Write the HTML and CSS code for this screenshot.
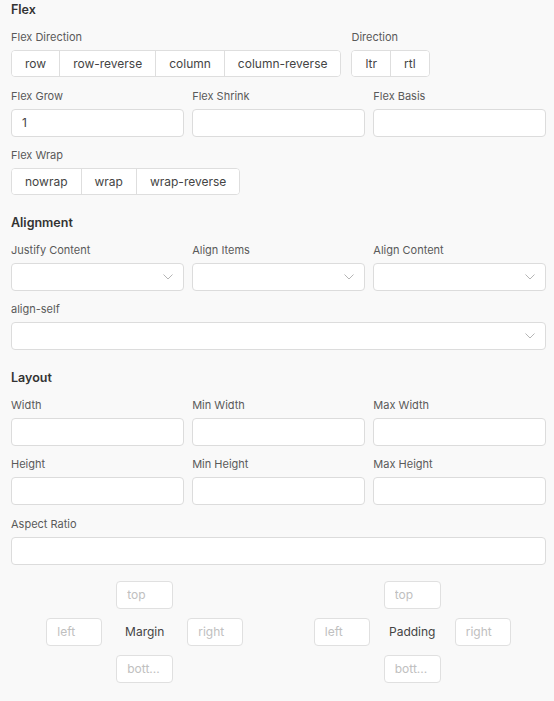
FILE: index.html
```html
<!DOCTYPE html>
<html>
<head>
<meta charset="utf-8">
<link rel="stylesheet" href="styles.css">
</head>
<body>
<div class="panel">
  <section class="section">
    <h2 class="heading">Flex</h2>
    <div class="row row-split">
      <div class="field">
        <div class="label">Flex Direction</div>
        <div class="seg">
          <button class="seg-btn">row</button>
          <button class="seg-btn">row-reverse</button>
          <button class="seg-btn">column</button>
          <button class="seg-btn">column-reverse</button>
        </div>
      </div>
      <div class="field">
        <div class="label">Direction</div>
        <div class="seg">
          <button class="seg-btn">ltr</button>
          <button class="seg-btn">rtl</button>
        </div>
      </div>
    </div>
    <div class="row grid3">
      <div class="field">
        <div class="label">Flex Grow</div>
        <input class="input" value="1">
      </div>
      <div class="field">
        <div class="label">Flex Shrink</div>
        <input class="input">
      </div>
      <div class="field">
        <div class="label">Flex Basis</div>
        <input class="input">
      </div>
    </div>
    <div class="row">
      <div class="field">
        <div class="label">Flex Wrap</div>
        <div class="seg">
          <button class="seg-btn">nowrap</button>
          <button class="seg-btn">wrap</button>
          <button class="seg-btn">wrap-reverse</button>
        </div>
      </div>
    </div>
  </section>

  <section class="section">
    <h2 class="heading">Alignment</h2>
    <div class="row grid3">
      <div class="field">
        <div class="label">Justify Content</div>
        <div class="select"><svg class="chev" width="10" height="6" viewBox="0 0 10 6"><path d="M0.5 0.5 L5 5 L9.5 0.5" fill="none" stroke="#b5b5b5" stroke-width="1"/></svg></div>
      </div>
      <div class="field">
        <div class="label">Align Items</div>
        <div class="select"><svg class="chev" width="10" height="6" viewBox="0 0 10 6"><path d="M0.5 0.5 L5 5 L9.5 0.5" fill="none" stroke="#b5b5b5" stroke-width="1"/></svg></div>
      </div>
      <div class="field">
        <div class="label">Align Content</div>
        <div class="select"><svg class="chev" width="10" height="6" viewBox="0 0 10 6"><path d="M0.5 0.5 L5 5 L9.5 0.5" fill="none" stroke="#b5b5b5" stroke-width="1"/></svg></div>
      </div>
    </div>
    <div class="row">
      <div class="field">
        <div class="label">align-self</div>
        <div class="select"><svg class="chev" width="10" height="6" viewBox="0 0 10 6"><path d="M0.5 0.5 L5 5 L9.5 0.5" fill="none" stroke="#b5b5b5" stroke-width="1"/></svg></div>
      </div>
    </div>
  </section>

  <section class="section">
    <h2 class="heading">Layout</h2>
    <div class="row grid3">
      <div class="field"><div class="label">Width</div><input class="input"></div>
      <div class="field"><div class="label">Min Width</div><input class="input"></div>
      <div class="field"><div class="label">Max Width</div><input class="input"></div>
    </div>
    <div class="row grid3">
      <div class="field"><div class="label">Height</div><input class="input"></div>
      <div class="field"><div class="label">Min Height</div><input class="input"></div>
      <div class="field"><div class="label">Max Height</div><input class="input"></div>
    </div>
    <div class="row">
      <div class="field"><div class="label">Aspect Ratio</div><input class="input"></div>
    </div>
    <div class="spacing">
      <div class="box">
        <input class="small t" placeholder="top">
        <input class="small l" placeholder="left">
        <div class="box-title">Margin</div>
        <input class="small r" placeholder="right">
        <input class="small b" placeholder="bott...">
      </div>
      <div class="box">
        <input class="small t" placeholder="top">
        <input class="small l" placeholder="left">
        <div class="box-title">Padding</div>
        <input class="small r" placeholder="right">
        <input class="small b" placeholder="bott...">
      </div>
    </div>
  </section>
</div>
</body>
</html>
```

FILE: styles.css
```css
* { box-sizing: border-box; }
html, body { margin: 0; padding: 0; background: #f9f9f9; }
body {
  font-family: Inter, "Noto Sans", "Liberation Sans", sans-serif;
  color: #555;
  width: 554px;
  height: 701px;
  overflow: hidden;
}
.panel {
  padding: 2px 8px 0 11px;
}
.section { margin-bottom: 19.5px; }
.heading {
  margin: 0 0 12px;
  font-size: 12.5px;
  line-height: 16px;
  font-weight: 600;
  color: #333;
}
.row { margin-bottom: 11.5px; }
.row-split { display: flex; gap: 10px; }
.grid3 {
  display: grid;
  grid-template-columns: 1fr 1fr 1fr;
  column-gap: 8.5px;
}
.field { display: flex; flex-direction: column; align-items: stretch; }
.label {
  font-size: 11px;
  line-height: 14px;
  height: 14px;
  color: #5a5a5a;
  margin-bottom: 6px;
}
.seg {
  display: flex;
  align-self: flex-start;
  height: 27px;
  border: 1px solid #dedede;
  border-radius: 4px;
  background: #fff;
  overflow: hidden;
}
.seg-btn {
  font-family: inherit;
  font-size: 12px;
  line-height: 25px;
  color: #444;
  background: #fff;
  border: 0;
  border-left: 1px solid #dedede;
  padding: 0 13px;
  margin: 0;
  height: 25px;
}
.seg-btn:first-child { border-left: 0; }
.input {
  display: block;
  height: 28px;
  width: 100%;
  margin: 0;
  border: 1px solid #dcdcdc;
  border-radius: 4px;
  background: #fff;
  font-family: inherit;
  font-size: 12px;
  color: #444;
  padding: 0 10px;
  outline: none;
}
.select {
  height: 28px;
  border: 1px solid #dcdcdc;
  border-radius: 4px;
  background: #fff;
  display: flex;
  align-items: center;
  justify-content: flex-end;
  padding-right: 10px;
}
.chev { display: block; }
.spacing {
  display: grid;
  grid-template-columns: 1fr 1fr;
  margin-top: 16px;
}
.box {
  justify-self: center;
  display: grid;
  grid-template-columns: 56px 57px 56px;
  grid-template-rows: 28px 28px 28px;
  column-gap: 14px;
  row-gap: 9px;
  grid-template-areas:
    ". t ."
    "l c r"
    ". b .";
}
.small {
  display: block;
  margin: 0;
  width: 100%;
  height: 28px;
  border: 1px solid #e0e0e0;
  border-radius: 4px;
  background: #fff;
  font-family: inherit;
  font-size: 12px;
  padding: 0 10px;
  color: #444;
  outline: none;
}
.small::placeholder { color: #c0c0c0; }
.small.t { grid-area: t; }
.small.l { grid-area: l; }
.small.r { grid-area: r; }
.small.b { grid-area: b; }
.box-title {
  grid-area: c;
  align-self: center;
  justify-self: center;
  font-size: 12px;
  color: #444;
  white-space: nowrap;
}
```
